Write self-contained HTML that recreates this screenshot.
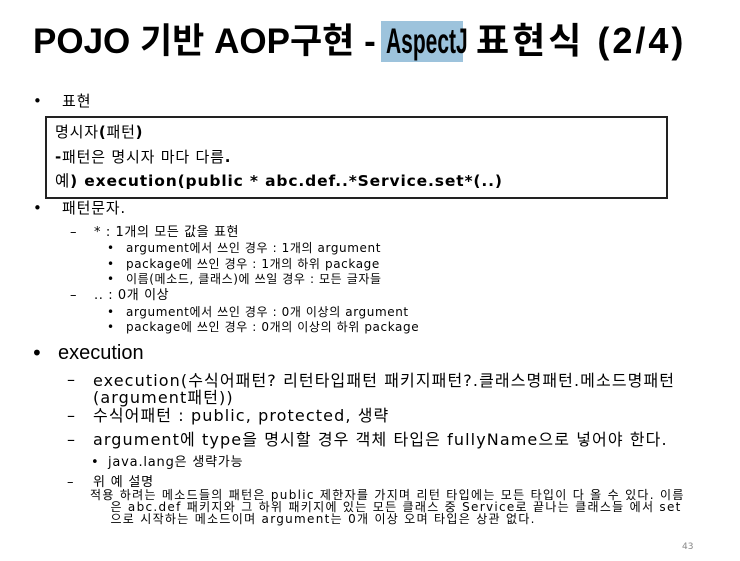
<!DOCTYPE html>
<html><head><meta charset="utf-8"><style>
body{margin:0;width:740px;height:561px;background:#fff;position:relative;overflow:hidden;font-family:"DejaVu Sans","Noto Sans CJK KR",sans-serif;color:#000}
.a{position:absolute;white-space:nowrap;line-height:1}
.t{position:absolute;white-space:nowrap;line-height:1;top:24px;font-size:35px;font-weight:bold;font-family:'Liberation Sans','Noto Sans CJK KR',sans-serif;transform-origin:left top}
</style></head><body>
<div class="a" style="left:381px;top:21px;width:82px;height:41px;background:#9dc3dc"></div>
<div class="t" style="left:33px">POJO 기반 AOP구현 -</div>
<div class="t" style="left:386px;transform:scaleX(0.6)">AspectJ</div>
<div class="t" style="left:476px;letter-spacing:3px;font-size:36px;top:23px">표현식 (2/4)</div>

<div class="a" style="left:33px;top:94px;font-size:15px">•</div>
<div class="a" style="left:62px;top:94px;font-size:15px;letter-spacing:1px">표현</div>
<div class="a" style="left:45px;top:116px;width:619px;height:79px;border:2px solid #222"></div>
<div class="a" style="left:55px;top:125px;font-size:15px;letter-spacing:0.8px">명시자<b>(</b>패턴<b>)</b></div>
<div class="a" style="left:55px;top:150px;font-size:15px;letter-spacing:0.8px"><b>-</b>패턴은 명시자 마다 다름<b>.</b></div>
<div class="a" style="left:55px;top:174px;font-size:15.5px;letter-spacing:0.85px">예<b>) execution(public * abc.def..*Service.set*(..)</b></div>
<div class="a" style="left:33px;top:201px;font-size:15px">•</div>
<div class="a" style="left:62px;top:201px;font-size:15px;letter-spacing:0.8px">패턴문자.</div>

<div class="a" style="left:70px;top:226px;font-size:13px">–</div>
<div class="a" style="left:94px;top:226px;font-size:13px;letter-spacing:0.6px">* : 1개의 모든 값을 표현</div>
<div class="a" style="left:107px;top:242px;font-size:12px">•</div>
<div class="a" style="left:126px;top:242px;font-size:12px;letter-spacing:0.6px">argument에서 쓰인 경우 : 1개의 argument</div>
<div class="a" style="left:107px;top:258px;font-size:12px">•</div>
<div class="a" style="left:126px;top:258px;font-size:12px;letter-spacing:0.6px">package에 쓰인 경우 : 1개의 하위 package</div>
<div class="a" style="left:107px;top:273px;font-size:12px">•</div>
<div class="a" style="left:126px;top:273px;font-size:12px;letter-spacing:0.6px">이름(메소드, 클래스)에 쓰일 경우 : 모든 글자들</div>
<div class="a" style="left:70px;top:289px;font-size:13px">–</div>
<div class="a" style="left:94px;top:289px;font-size:13px;letter-spacing:0.6px">.. : 0개 이상</div>
<div class="a" style="left:107px;top:306px;font-size:12px">•</div>
<div class="a" style="left:126px;top:306px;font-size:12px;letter-spacing:0.6px">argument에서 쓰인 경우 : 0개 이상의 argument</div>
<div class="a" style="left:107px;top:321px;font-size:12px">•</div>
<div class="a" style="left:126px;top:321px;font-size:12px;letter-spacing:0.6px">package에 쓰인 경우 : 0개의 이상의 하위 package</div>

<div class="a" style="left:31px;top:343px;font-size:20px">•</div>
<div class="a" style="left:58px;top:343px;font-size:20px;font-family:'Liberation Sans',sans-serif">execution</div>
<div class="a" style="left:67px;top:372px;font-size:16px">–</div>
<div class="a" style="left:93px;top:372px;font-size:16px;line-height:17px;letter-spacing:1.1px">execution(수식어패턴? 리턴타입패턴 패키지패턴?.클래스명패턴.메소드명패턴<br>(argument패턴))</div>
<div class="a" style="left:67px;top:408px;font-size:16px">–</div>
<div class="a" style="left:93px;top:408px;font-size:16px;letter-spacing:1.1px">수식어패턴 :  public, protected, 생략</div>
<div class="a" style="left:67px;top:432px;font-size:16px">–</div>
<div class="a" style="left:93px;top:432px;font-size:16px;letter-spacing:1.1px">argument에 type을 명시할 경우 객체 타입은 fullyName으로 넣어야 한다.</div>
<div class="a" style="left:91px;top:456px;font-size:13px">•</div>
<div class="a" style="left:108px;top:456px;font-size:13px;letter-spacing:0.8px">java.lang은 생략가능</div>
<div class="a" style="left:67px;top:476px;font-size:13px">–</div>
<div class="a" style="left:93px;top:476px;font-size:13px;letter-spacing:0.8px">위 예 설명</div>
<div class="a" style="left:90px;top:489px;font-size:12px;line-height:12px;letter-spacing:1.3px">적용 하려는 메소드들의 패턴은 public 제한자를 가지며 리턴 타입에는 모든 타입이 다 올 수 있다. 이름<br>&nbsp;&nbsp;&nbsp;&nbsp;은  abc.def 패키지와 그 하위 패키지에 있는 모든 클래스 중  Service로 끝나는 클래스들 에서 set<br>&nbsp;&nbsp;&nbsp;&nbsp;으로 시작하는 메소드이며 argument는 0개 이상 오며 타입은 상관 없다.</div>
<div class="a" style="left:682px;top:543px;font-size:9px;color:#888">43</div>
</body></html>
